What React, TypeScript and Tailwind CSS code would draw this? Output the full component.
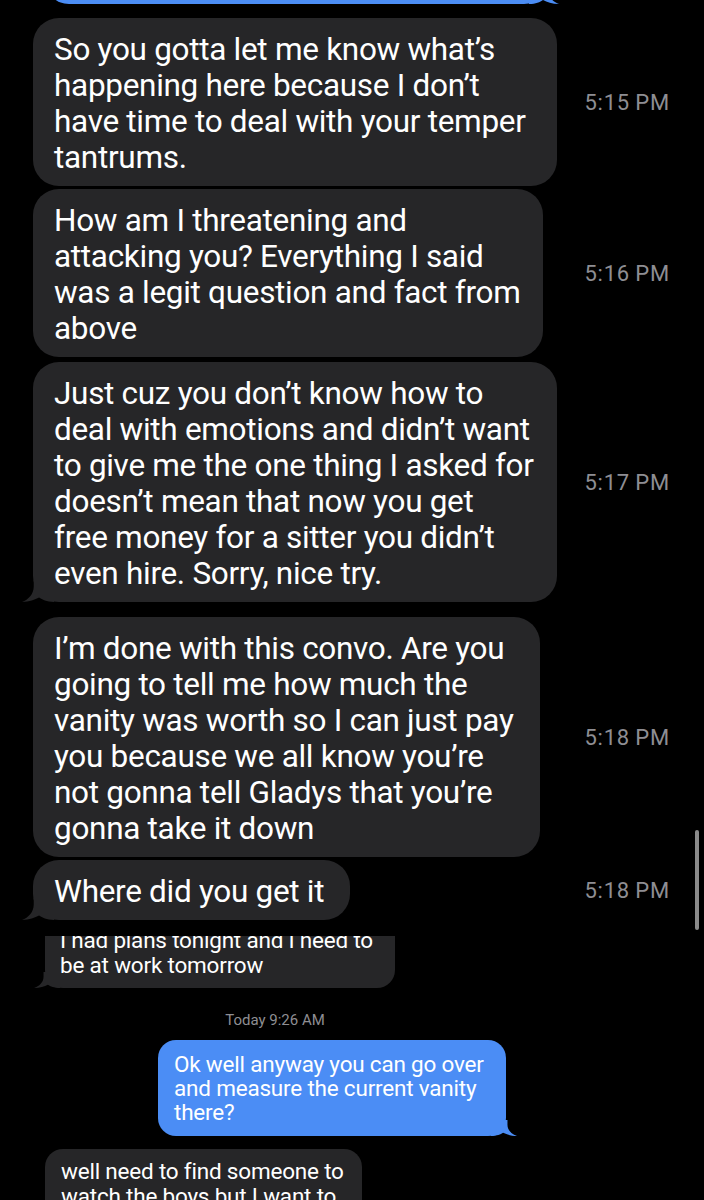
import React from "react";

function TailLeft({ color, size = 20 }: { color: string; size?: number }) {
  return (
    <svg
      className="absolute bottom-0 -left-[11px]"
      width={size + 10}
      height={size}
      viewBox="0 0 30 20"
      preserveAspectRatio="none"
    >
      <path d="M11 0 L11 6 C11 13 6 18 0 20 C7 20 12 18 16 16 C19 18 23 20 30 20 L30 0 Z" fill={color} />
    </svg>
  );
}

function TailRight({ color, size = 20 }: { color: string; size?: number }) {
  return (
    <svg
      className="absolute bottom-0 -right-[11px]"
      width={size + 10}
      height={size}
      viewBox="0 0 30 20"
      preserveAspectRatio="none"
    >
      <path d="M19 0 L19 6 C19 13 24 18 30 20 C23 20 18 18 14 16 C11 18 7 20 0 20 L0 0 Z" fill={color} />
    </svg>
  );
}

type Big = { lines: string[]; time: string; width: string; mt: string; tail?: boolean };

const bigMessages: Big[] = [
  {
    lines: [
      "So you gotta let me know what\u2019s",
      "happening here because I don\u2019t",
      "have time to deal with your temper",
      "tantrums.",
    ],
    time: "5:15\u2009PM",
    width: "w-[524px]",
    mt: "mt-[14px]",
  },
  {
    lines: [
      "How am I threatening and",
      "attacking you? Everything I said",
      "was a legit question and fact from",
      "above",
    ],
    time: "5:16\u2009PM",
    width: "w-[510px]",
    mt: "mt-[3px]",
  },
  {
    lines: [
      "Just cuz you don\u2019t know how to",
      "deal with emotions and didn\u2019t want",
      "to give me the one thing I asked for",
      "doesn\u2019t mean that now you get",
      "free money for a sitter you didn\u2019t",
      "even hire. Sorry, nice try.",
    ],
    time: "5:17\u2009PM",
    width: "w-[524px]",
    mt: "mt-[5px]",
    tail: true,
  },
  {
    lines: [
      "I\u2019m done with this convo. Are you",
      "going to tell me how much the",
      "vanity was worth so I can just pay",
      "you because we all know you\u2019re",
      "not gonna tell Gladys that you\u2019re",
      "gonna take it down",
    ],
    time: "5:18\u2009PM",
    width: "w-[507px]",
    mt: "mt-[15px]",
  },
  {
    lines: ["Where did you get it"],
    time: "5:18\u2009PM",
    width: "w-[317px]",
    mt: "mt-[3px]",
    tail: true,
  },
];

export default function App() {
  return (
    <div className="relative w-[704px] h-[1200px] overflow-hidden bg-black text-white font-['Roboto',sans-serif]">
      {/* top edge of the previous blue bubble */}
      <div className="h-[4px] overflow-hidden flex items-end pl-[45px]">
        <div className="relative w-[503px] h-[60px] shrink-0 bg-[#4b8df5] rounded-b-[24px]">
          <TailRight color="#4b8df5" />
        </div>
      </div>

      {/* enlarged part of the thread */}
      {bigMessages.map((m, i) => (
        <div key={i} className={`flex items-center ${m.mt}`}>
          <div className="flex-1 pl-[33px]">
            <div className={`relative ${m.width} bg-[#262628] rounded-[26px] pl-[21px] pt-[14px] pb-[10px]`}>
              {m.lines.map((l, j) => (
                <div key={j} className="whitespace-nowrap text-[31.5px] leading-[36px] tracking-[-0.3px]">
                  {l}
                </div>
              ))}
              {m.tail && <TailLeft color="#262628" size={22} />}
            </div>
          </div>
          <div className="w-[134px] pr-[34px] text-right text-[22px] tracking-[0.8px] text-[#8e8e93]">
            {m.time}
          </div>
        </div>
      ))}

      {/* smaller, stitched part */}
      <div className="mt-[16px] pl-[45px]">
        <div className="relative w-[350px] bg-[#262628] rounded-b-[18px] pl-[15px] pb-[10px]">
          <div className="overflow-hidden">
            <div className="-mt-[8px] text-[22.5px] leading-[25px] tracking-[-0.2px] whitespace-nowrap">
              <div>I had plans tonight and I need to</div>
              <div>be at work tomorrow</div>
            </div>
          </div>
          <TailLeft color="#262628" size={16} />
        </div>
      </div>

      <div className="w-[550px] mt-[21px] text-center text-[15px] text-[#8e8e93]">Today 9:26 AM</div>

      <div className="mt-[8px] pl-[158px]">
        <div className="relative w-[348px] bg-[#4b8df5] rounded-[18px] pl-[16px] pt-[12px] pb-[12px]">
          <div className="text-[22.5px] leading-[24px] tracking-[-0.2px] whitespace-nowrap">
            <div>Ok well anyway you can go over</div>
            <div>and measure the current vanity</div>
            <div>there?</div>
          </div>
          <TailRight color="#4b8df5" size={16} />
        </div>
      </div>

      <div className="mt-[13px] pl-[45px]">
        <div className="relative w-[317px] bg-[#262628] rounded-[18px] pl-[16px] pt-[10px] pb-[10px]">
          <div className="text-[22.5px] leading-[25px] tracking-[-0.2px] whitespace-nowrap">
            <div>well need to find someone to</div>
            <div>watch the boys but I want to</div>
          </div>
        </div>
      </div>

      {/* scroll indicator */}
      <div className="absolute left-[695px] top-[830px] w-[4px] h-[100px] rounded-full bg-[#8a8a8a]" />
    </div>
  );
}
